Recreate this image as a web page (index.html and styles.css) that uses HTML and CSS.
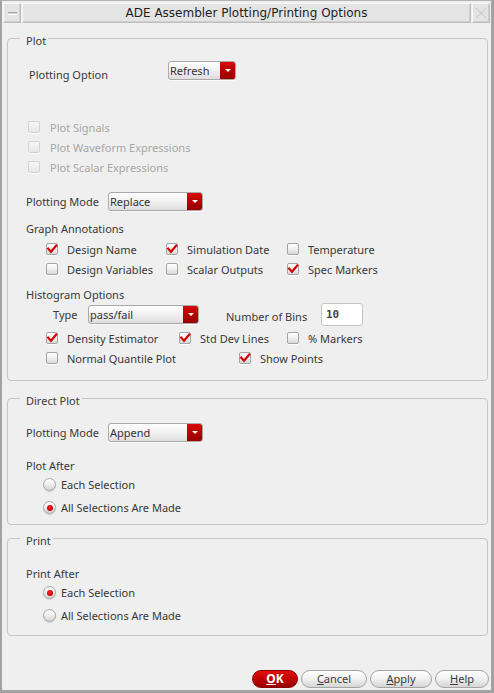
FILE: index.html
```html
<!DOCTYPE html>
<html>
<head>
<meta charset="utf-8">
<title>ADE Assembler Plotting/Printing Options</title>
<link rel="stylesheet" href="styles.css">
</head>
<body>
<div class="window">
  <div class="titlebar">
    <div class="tb-btn tb-min"><span class="dash"></span></div>
    <div class="tb-title">ADE Assembler Plotting/Printing Options</div>
    <div class="tb-btn tb-close">
      <svg width="12" height="12" viewBox="0 0 12 12"><path d="M1 1 L11 11 M11 1 L1 11" stroke="#c4c4c4" stroke-width="1.4" stroke-dasharray="1.2 1.2" fill="none"/></svg>
    </div>
  </div>

  <div class="content">
    <fieldset class="group g-plot">
      <legend>Plot</legend>
      <div class="row r-popt">
        <span class="lbl lbl-popt">Plotting Option</span>
        <div class="combo c-refresh"><span class="ct">Refresh</span><span class="arrow"></span></div>
      </div>

      <div class="dis-list">
        <div class="chk dis"><span class="box"></span><span>Plot Signals</span></div>
        <div class="chk dis"><span class="box"></span><span>Plot Waveform Expressions</span></div>
        <div class="chk dis"><span class="box"></span><span>Plot Scalar Expressions</span></div>
      </div>

      <div class="row r-mode">
        <span class="lbl lbl-mode">Plotting Mode</span>
        <div class="combo c-mode"><span class="ct">Replace</span><span class="arrow"></span></div>
      </div>

      <div class="heading h-graph">Graph Annotations</div>
      <div class="grid-ann">
        <div class="chk on w120"><span class="box"><svg viewBox="0 0 12 12"><path d="M2.2 5.6 L5 8.8 L10.2 2.6"/></svg></span><span>Design Name</span></div>
        <div class="chk on w121"><span class="box"><svg viewBox="0 0 12 12"><path d="M2.2 5.6 L5 8.8 L10.2 2.6"/></svg></span><span>Simulation Date</span></div>
        <div class="chk"><span class="box"></span><span>Temperature</span></div>
        <div class="chk w120"><span class="box"></span><span>Design Variables</span></div>
        <div class="chk w121"><span class="box"></span><span>Scalar Outputs</span></div>
        <div class="chk on"><span class="box"><svg viewBox="0 0 12 12"><path d="M2.2 5.6 L5 8.8 L10.2 2.6"/></svg></span><span>Spec Markers</span></div>
      </div>

      <div class="heading h-hist">Histogram Options</div>
      <div class="row r-type">
        <span class="lbl lbl-type">Type</span>
        <div class="combo c-type"><span class="ct">pass/fail</span><span class="arrow"></span></div>
        <span class="lbl lbl-bins">Number of Bins</span>
        <div class="field">10</div>
      </div>
      <div class="hist-checks">
        <div class="hrow">
          <div class="chk on w133"><span class="box"><svg viewBox="0 0 12 12"><path d="M2.2 5.6 L5 8.8 L10.2 2.6"/></svg></span><span>Density Estimator</span></div>
          <div class="chk on w108"><span class="box"><svg viewBox="0 0 12 12"><path d="M2.2 5.6 L5 8.8 L10.2 2.6"/></svg></span><span>Std Dev Lines</span></div>
          <div class="chk"><span class="box"></span><span>% Markers</span></div>
        </div>
        <div class="hrow">
          <div class="chk w193"><span class="box"></span><span>Normal Quantile Plot</span></div>
          <div class="chk on"><span class="box"><svg viewBox="0 0 12 12"><path d="M2.2 5.6 L5 8.8 L10.2 2.6"/></svg></span><span>Show Points</span></div>
        </div>
      </div>
    </fieldset>

    <fieldset class="group g-direct">
      <legend>Direct Plot</legend>
      <div class="row r-mode r-mode2">
        <span class="lbl lbl-mode">Plotting Mode</span>
        <div class="combo c-mode"><span class="ct">Append</span><span class="arrow"></span></div>
      </div>
      <div class="heading h-after">Plot After</div>
      <div class="radios">
        <div class="rad"><span class="dot"></span><span>Each Selection</span></div>
        <div class="rad on"><span class="dot"></span><span>All Selections Are Made</span></div>
      </div>
    </fieldset>

    <fieldset class="group g-print">
      <legend>Print</legend>
      <div class="heading h-after h-print">Print After</div>
      <div class="radios">
        <div class="rad on"><span class="dot"></span><span>Each Selection</span></div>
        <div class="rad"><span class="dot"></span><span>All Selections Are Made</span></div>
      </div>
    </fieldset>
  </div>

  <div class="buttons">
    <div class="btn ok"><u>O</u>K</div>
    <div class="btn b-cancel"><u>C</u>ancel</div>
    <div class="btn b-apply"><u>A</u>pply</div>
    <div class="btn b-help"><u>H</u>elp</div>
  </div>
</div>
</body>
</html>
```

FILE: styles.css
```css
* { box-sizing: border-box; }
html, body { margin: 0; padding: 0; }
body {
  width: 494px;
  height: 693px;
  overflow: hidden;
  background: #efefef;
  font-family: "Noto Sans", "Open Sans", sans-serif;
  font-size: 11px;
  line-height: 15px;
  color: #383838;
}

.window {
  width: 494px;
  height: 693px;
  display: flex;
  flex-direction: column;
  background: #efefef;
  border-left: 2px solid #a2a2a2;
  border-top: 1px solid #b4b4b4;
  border-right: 3px solid #a2a2a2;
  border-bottom: 3px solid #a2a2a2;
}

/* title bar */
.titlebar {
  display: flex;
  height: 20px;
  margin: 2px 1px 0 1px;
  gap: 1px;
}
.tb-btn, .tb-title {
  border: 1px solid #bdbdbd;
  border-top-color: #f8f8f8;
  border-left-color: #f8f8f8;
  background: #e4e4e4;
  box-shadow: inset -1px -1px 0 #cfcfcf;
}
.tb-btn {
  width: 18px;
  display: flex;
  align-items: center;
  justify-content: center;
}
.tb-title {
  flex: 1;
  text-align: center;
  font-family: "DejaVu Sans", sans-serif;
  font-size: 12px;
  line-height: 18px;
  color: #1e1e1e;
}
.dash {
  width: 9px;
  height: 3px;
  border-top: 1px solid #a8a8a8;
  border-bottom: 1px solid #ffffff;
  background: #d4d4d4;
}

/* content */
.content {
  display: flex;
  flex-direction: column;
}
.group {
  margin: 0 3px 0 5px;
  padding: 0;
  border: 1px solid #c6c6c6;
  border-radius: 4px;
  min-width: 0;
}
.group legend {
  margin-left: 12px;
  padding: 4px 2px 0 6px;
  line-height: 15px;
  color: #3a3a3a;
}
.g-plot { margin-top: 6px; padding-bottom: 12px; }
.g-direct { margin-top: 8px; padding-bottom: 5px; }
.g-print { margin-top: 4px; padding-bottom: 8px; }

.row { display: flex; align-items: flex-start; }
.lbl { white-space: nowrap; }

.r-popt { margin-top: 13px; padding-left: 21px; height: 19px; }
.lbl-popt { width: 139px; margin-top: 6px; }

.dis-list { margin-top: 37px; padding-left: 20px; }

.r-mode { margin-top: 15px; padding-left: 18px; height: 19px; }
.r-mode2 { margin-top: 15px; }
.lbl-mode { width: 82px; margin-top: 2px; }

.heading { padding-left: 18px; }
.h-graph { margin-top: 10px; }
.h-hist { margin-top: 8px; }
.h-after { margin-top: 16px; }
.h-print { margin-top: 18px; }

/* combo boxes */
.combo {
  display: flex;
  height: 19px;
  border: 1px solid #a9a9a9;
  border-radius: 3px;
  overflow: hidden;
  background: linear-gradient(#fefefe, #f2f2f2 45%, #dedede);
  box-shadow: 0 1px 0 rgba(255,255,255,0.7);
}
.combo .ct {
  flex: 1;
  padding: 0 0 0 1px;
  line-height: 15px;
  margin-top: 1px;
  color: #333;
}
.combo .arrow {
  width: 15px;
  background: linear-gradient(#d80a0a, #b40000 55%, #960000);
  display: flex;
  align-items: center;
  justify-content: center;
}
.combo .arrow::after {
  content: "";
  width: 0;
  height: 0;
  border-left: 3px solid transparent;
  border-right: 3px solid transparent;
  border-top: 3px solid #ffffff;
}
.c-refresh { width: 68px; }
.c-mode { width: 95px; }
.c-type { width: 111px; height: 19px; }

/* checkboxes */
.chk {
  display: flex;
  align-items: center;
  height: 20px;
  white-space: nowrap;
}
.chk .box {
  width: 12px;
  height: 12px;
  flex: none;
  margin-right: 9px;
  border: 1px solid #a4a4a4;
  border-radius: 2px;
  background: linear-gradient(#ffffff, #f3f3f3 40%, #d9d9d9);
  box-shadow: 0 1px 0 rgba(255,255,255,0.8);
  display: flex;
}
.chk .box svg { width: 12px; height: 12px; margin: -1px; }
.chk .box svg path {
  fill: none;
  stroke: #d40000;
  stroke-width: 2.2;
  stroke-linecap: square;
  stroke-linejoin: miter;
}
.chk.dis { color: #a6a6a6; }
.chk.dis .box {
  border-color: #d2d2d2;
  background: linear-gradient(#f8f8f8, #e6e6e6);
  margin-right: 10px;
}

.grid-ann { display: flex; flex-wrap: wrap; margin-top: 3px; padding-left: 38px; }
.w120 { width: 120px; }
.w121 { width: 121px; }
.w133 { width: 133px; }
.w108 { width: 108px; }
.w193 { width: 193px; }
.grid-ann .chk:nth-child(3n) { width: 200px; }

.r-type { margin-top: 1px; padding-left: 45px; align-items: center; }
.lbl-type { width: 35px; }
.lbl-bins { width: 95px; margin-left: 27px; margin-top: 3px; }
.field {
  width: 42px;
  height: 23px;
  border: 1px solid #c4c4c4;
  border-radius: 3px;
  background: #ffffff;
  padding-left: 4px;
  font-family: "DejaVu Sans Mono", monospace;
  font-weight: bold;
  font-size: 11px;
  line-height: 21px;
  color: #444;
}

.hist-checks { margin-top: 2px; padding-left: 38px; }
.hrow { display: flex; }

/* radios */
.radios { padding-left: 35px; }
.rad {
  display: flex;
  align-items: center;
  height: 23px;
  white-space: nowrap;
}
.rad .dot {
  width: 13px;
  height: 13px;
  flex: none;
  margin-right: 5px;
  border: 1px solid #a6a6a6;
  border-radius: 50%;
  background: linear-gradient(#ffffff, #f0f0f0 45%, #d2d2d2);
  box-shadow: 0 1px 1px rgba(0,0,0,0.12);
  display: flex;
  align-items: center;
  justify-content: center;
}
.rad.on .dot::after {
  content: "";
  width: 6px;
  height: 6px;
  border-radius: 50%;
  background: radial-gradient(circle at 45% 40%, #ff2a2a, #d20000 60%, #a00000);
}

/* buttons */
.buttons {
  margin-top: auto;
  margin-bottom: 2px;
  display: flex;
  justify-content: flex-end;
  gap: 3px;
  padding-right: 2px;
}
.btn {
  height: 18px;
  border: 1px solid #a4a4a4;
  border-radius: 9px;
  background: linear-gradient(#ffffff, #f2f2f2 45%, #d6d6d6);
  text-align: center;
  line-height: 16px;
  color: #3a3a3a;
  font-size: 11px;
}
.btn u { text-decoration: underline; text-underline-offset: 1px; }
.ok {
  width: 46px;
  background: linear-gradient(#e21010, #c00000 50%, #9a0000);
  border-color: #8a0000;
  color: #ffffff;
  font-weight: bold;
  font-size: 12px;
}
.b-cancel { width: 66px; }
.b-apply { width: 62px; }
.b-help { width: 54px; }
```
